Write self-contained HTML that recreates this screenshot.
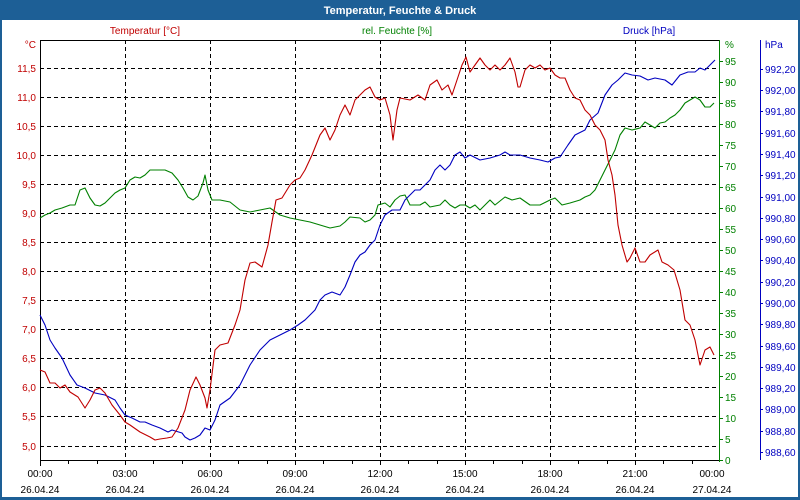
<!DOCTYPE html>
<html><head><meta charset="utf-8"><style>
html,body{margin:0;padding:0;background:#fff;width:800px;height:500px;overflow:hidden}
svg text{font-family:"Liberation Sans","DejaVu Sans",sans-serif;font-size:10px}
</style></head><body>
<svg width="800" height="500" xmlns="http://www.w3.org/2000/svg">
<rect x="0" y="0" width="800" height="500" fill="#fff"/>
<rect x="0" y="0" width="800" height="20" fill="#1d5f96"/>
<rect x="0" y="0" width="2" height="500" fill="#1d5f96"/>
<rect x="798" y="0" width="2" height="500" fill="#1d5f96"/>
<rect x="0" y="497" width="800" height="3" fill="#1d5f96"/>
<text x="400" y="14" fill="#fff" font-weight="bold" text-anchor="middle" style="font-size:11px">Temperatur, Feuchte &amp; Druck</text>
<text x="145" y="34" fill="#c00000" text-anchor="middle">Temperatur [°C]</text>
<text x="397" y="34" fill="#008000" text-anchor="middle">rel. Feuchte [%]</text>
<text x="649" y="34" fill="#0000c0" text-anchor="middle">Druck [hPa]</text>
<g stroke="#000" stroke-width="1" stroke-dasharray="4,3" fill="none">
<path d="M40,68.5H720M40,97.5H720M40,126.5H720M40,155.5H720M40,184.5H720M40,213.5H720M40,242.5H720M40,271.5H720M40,300.5H720M40,329.5H720M40,358.5H720M40,387.5H720M40,416.5H720M40,446.5H720"/>
<path d="M125.5,40V460M210.5,40V460M295.5,40V460M380.5,40V460M465.5,40V460M550.5,40V460M635.5,40V460"/>
</g>
<g stroke="#000" fill="none"><path d="M40,40.5H720M40.5,40V466M40,460.5H720"/>
<path d="M68.5,460v4M97.5,460v4M125.5,460v5M153.5,460v4M182.5,460v4M210.5,460v5M238.5,460v4M267.5,460v4M295.5,460v5M323.5,460v4M352.5,460v4M380.5,460v5M408.5,460v4M437.5,460v4M465.5,460v5M493.5,460v4M522.5,460v4M550.5,460v5M578.5,460v4M607.5,460v4M635.5,460v5M663.5,460v4M692.5,460v4"/></g>
<path d="M719.5,40V462" stroke="#008000" fill="none"/>
<path d="M760.5,40V460" stroke="#0000c0" fill="none"/>
<g fill="#c00000" text-anchor="end">
<text x="36" y="48">°C</text>
<text x="36" y="72">11,5</text><text x="36" y="101">11,0</text><text x="36" y="130">10,5</text><text x="36" y="159">10,0</text><text x="36" y="188">9,5</text><text x="36" y="217">9,0</text><text x="36" y="246">8,5</text><text x="36" y="275">8,0</text><text x="36" y="304">7,5</text><text x="36" y="333">7,0</text><text x="36" y="362">6,5</text><text x="36" y="391">6,0</text><text x="36" y="420">5,5</text><text x="36" y="450">5,0</text>
</g>
<g fill="#008000" stroke="#008000">
<path d="M720,61.5h3M720,82.5h3M720,103.5h3M720,124.5h3M720,145.5h3M720,166.5h3M720,187.5h3M720,208.5h3M720,229.5h3M720,250.5h3M720,271.5h3M720,292.5h3M720,313.5h3M720,334.5h3M720,355.5h3M720,376.5h3M720,397.5h3M720,418.5h3M720,439.5h3M720,460.5h3"/>
</g>
<g fill="#008000">
<text x="725" y="48">%</text>
<text x="725" y="65">95</text><text x="725" y="86">90</text><text x="725" y="107">85</text><text x="725" y="128">80</text><text x="725" y="149">75</text><text x="725" y="170">70</text><text x="725" y="191">65</text><text x="725" y="212">60</text><text x="725" y="233">55</text><text x="725" y="254">50</text><text x="725" y="275">45</text><text x="725" y="296">40</text><text x="725" y="317">35</text><text x="725" y="338">30</text><text x="725" y="359">25</text><text x="725" y="380">20</text><text x="725" y="401">15</text><text x="725" y="422">10</text><text x="725" y="443">5</text><text x="725" y="464">0</text>
</g>
<g stroke="#0000c0"><path d="M760,69.5h3M760,90.5h3M760,111.5h3M760,133.5h3M760,154.5h3M760,175.5h3M760,197.5h3M760,218.5h3M760,239.5h3M760,260.5h3M760,282.5h3M760,303.5h3M760,324.5h3M760,346.5h3M760,367.5h3M760,388.5h3M760,409.5h3M760,431.5h3M760,452.5h3"/></g>
<g fill="#0000c0">
<text x="765" y="48">hPa</text>
<text x="765" y="73">992,20</text><text x="765" y="94">992,00</text><text x="765" y="115">991,80</text><text x="765" y="137">991,60</text><text x="765" y="158">991,40</text><text x="765" y="179">991,20</text><text x="765" y="201">991,00</text><text x="765" y="222">990,80</text><text x="765" y="243">990,60</text><text x="765" y="264">990,40</text><text x="765" y="286">990,20</text><text x="765" y="307">990,00</text><text x="765" y="328">989,80</text><text x="765" y="350">989,60</text><text x="765" y="371">989,40</text><text x="765" y="392">989,20</text><text x="765" y="413">989,00</text><text x="765" y="435">988,80</text><text x="765" y="456">988,60</text>
</g>
<g fill="#000" text-anchor="middle">
<text x="40" y="477">00:00</text><text x="125" y="477">03:00</text><text x="210" y="477">06:00</text><text x="295" y="477">09:00</text><text x="380" y="477">12:00</text><text x="465" y="477">15:00</text><text x="550" y="477">18:00</text><text x="635" y="477">21:00</text><text x="712" y="477">00:00</text>
<text x="40" y="493">26.04.24</text><text x="125" y="493">26.04.24</text><text x="210" y="493">26.04.24</text><text x="295" y="493">26.04.24</text><text x="380" y="493">26.04.24</text><text x="465" y="493">26.04.24</text><text x="550" y="493">26.04.24</text><text x="635" y="493">26.04.24</text><text x="712" y="493">27.04.24</text>
</g>
<g fill="none" stroke-width="1.1" stroke-linejoin="round">
<polyline stroke="#008000" points="40,218 45,215 50,213 55,210 62,208 70,205 75,205 80,190 85,188 90,198 95,205 100,206 105,203 110,198 115,193 120,190 125,188 130,180 135,177 140,178 145,175 150,170 155,170 165,170 172,173 178,180 183,188 188,197 193,200 198,196 203,183 205,175 208,190 212,200 220,200 230,202 240,210 250,212 260,210 270,208 280,215 290,218 300,220 310,222 320,225 330,228 340,226 345,222 350,217 360,218 365,222 370,220 375,215 378,205 385,203 390,207 395,200 400,196 405,195 410,205 420,205 425,202 430,207 440,205 445,200 450,205 455,208 460,205 465,205 470,208 475,205 480,210 485,205 490,200 495,205 505,197 512,200 520,198 530,205 540,205 550,200 555,198 562,205 570,203 580,200 585,197 590,195 595,190 600,180 605,170 610,160 615,150 620,135 625,128 632,130 640,128 645,122 650,125 655,128 660,123 665,122 670,118 675,115 680,110 685,103 690,100 695,97 700,100 705,107 710,107 714,103"/>
<polyline stroke="#0000c0" points="40,315 45,325 50,340 55,348 62,358 70,375 77,385 85,388 95,393 105,395 115,400 120,408 125,415 132,418 140,422 145,422 152,425 160,428 168,432 172,430 182,433 185,437 190,440 195,438 200,435 205,428 210,430 215,420 220,405 230,398 240,385 250,365 260,350 270,340 280,335 290,330 298,325 305,320 315,310 320,300 325,295 332,292 340,295 345,287 350,275 355,262 360,255 365,252 370,245 375,240 380,225 385,215 392,210 400,210 405,200 410,195 415,190 420,190 430,180 435,170 440,165 445,170 450,165 455,155 460,152 465,158 470,155 480,160 490,158 500,155 505,152 510,155 520,155 530,158 540,160 548,162 555,158 560,157 568,145 575,135 585,130 590,120 598,113 605,95 612,85 618,80 625,73 632,75 640,76 648,80 655,78 665,80 672,85 680,75 688,72 695,72 700,68 705,70 710,65 715,60"/>
<polyline stroke="#c00000" points="40,370 45,372 50,383 55,383 60,388 65,385 70,392 78,397 85,408 90,400 95,390 100,388 105,393 112,405 120,415 125,422 130,425 140,432 150,437 155,440 160,439 167,438 172,437 178,428 185,410 190,390 196,377 200,385 205,398 207,408 210,390 215,350 220,345 228,343 235,325 240,310 245,280 250,263 255,262 262,267 268,245 272,222 276,200 282,198 290,185 295,180 300,178 305,170 312,155 320,135 325,128 330,140 335,130 340,115 345,105 350,115 355,100 360,95 365,90 370,87 375,97 380,100 385,98 390,115 393,140 397,110 400,98 410,100 418,95 425,100 430,85 437,80 442,90 448,85 452,95 457,80 462,65 466,57 470,72 475,65 480,58 485,65 490,70 495,65 500,70 505,65 510,58 515,72 518,87 520,87 525,70 530,65 535,68 540,65 545,70 550,68 555,75 560,78 565,78 570,90 575,98 580,100 585,110 590,115 595,125 600,130 605,140 608,160 612,175 615,195 618,225 622,245 627,262 630,258 635,248 640,262 645,262 650,255 658,250 662,262 668,265 674,270 680,290 685,320 690,325 695,340 700,365 705,350 710,347 714,355"/>
</g>
</svg>
</body></html>
